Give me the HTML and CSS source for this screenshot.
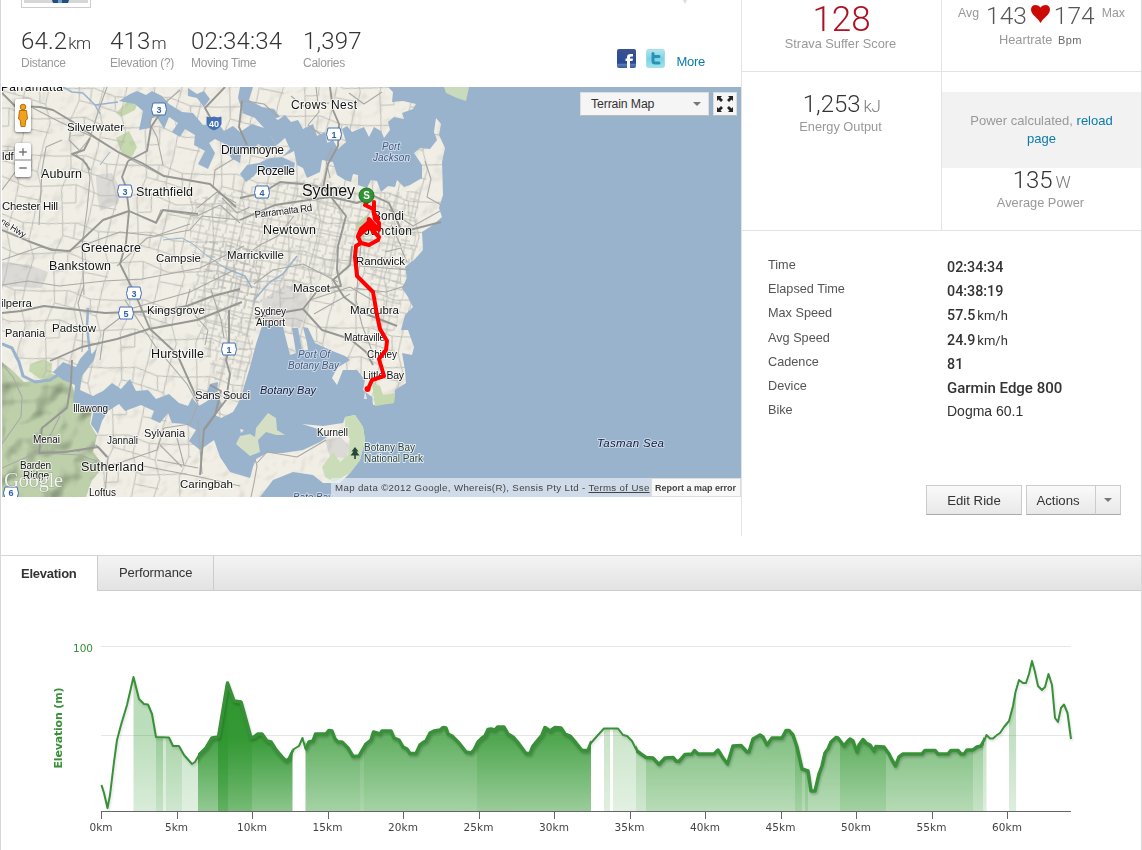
FILE: index.html
```
<!DOCTYPE html>
<html lang="en">
<head>
    <meta charset="UTF-8">
    <title>Ride Details</title>
    <link rel="stylesheet" href="styles.css">
</head>
<body>
<div class="page">
    <div class="ride">
        <div class="main">
            <div class="summary">
                <div class="avatar">
                    <svg width="64" height="3" viewBox="0 0 64 3"><rect width="64" height="3" fill="#d5d8d6"/><path d="M28 0h17l-1 3H29z" fill="#234f7c"/><path d="M34 0h4v3h-4z" fill="#6d9fc9"/></svg>
                </div>
                <div class="notch"></div>
            </div>
            <div class="stats-row">
                <ul class="stats">
                    <li class="distance"><b>64.2<small>km</small></b><span>Distance</span></li>
                    <li class="climb"><b>413<small>m</small></b><span>Elevation (?)</span></li>
                    <li class="moving"><b>02:34:34</b><span>Moving Time</span></li>
                    <li><b>1,397</b><span>Calories</span></li>
                </ul>
                <div class="share">
                    <svg width="20" height="21" viewBox="0 0 20 21">
                        <defs><linearGradient id="fb" x2="0" y2="1"><stop offset="0" stop-color="#3b5290"/><stop offset=".75" stop-color="#2b4a96"/><stop offset=".8" stop-color="#5d7cb8"/><stop offset="1" stop-color="#39599c"/></linearGradient></defs>
                        <rect width="19" height="19" rx="2" fill="url(#fb)"/>
                        <path d="M10 19v-7H8.500V9.500H10V8q0-3 3.500-3H16v2.500h-1.500q-1.500 0-1.500 1v1h3l-.5 2.500H13v7z" fill="#fff"/>
                    </svg>
                    <svg width="20" height="21" viewBox="0 0 20 21">
                        <defs><linearGradient id="tw" x2="0" y2="1"><stop offset="0" stop-color="#b3e6ef"/><stop offset=".5" stop-color="#7bd3e6"/><stop offset="1" stop-color="#9de4ed"/></linearGradient></defs>
                        <rect x=".5" y=".5" width="18" height="18" rx="2" fill="url(#tw)" stroke="#a5dde6"/>
                        <path d="M7 4.500v7.500q0 2 2 2H13M7 7.500H13" fill="none" stroke="#2c92b3" stroke-width="3" stroke-linecap="round"/>
                    </svg>
                    <a href="#">More</a>
                </div>
            </div>

            <div class="map">
                <svg class="tiles" width="739" height="410" viewBox="2 87 739 410">
                    <defs>
                        <filter id="relief" x="0" y="0" width="1" height="1">
                            <feTurbulence type="fractalNoise" baseFrequency=".07" numOctaves="2" seed="8"/>
                            <feDiffuseLighting surfaceScale="3" diffuseConstant="1.200" lighting-color="#fff"><feDistantLight azimuth="225" elevation="58"/></feDiffuseLighting>
                        </filter>
                        <filter id="hills" x="0" y="0" width="1" height="1">
                            <feTurbulence type="fractalNoise" baseFrequency=".04" numOctaves="2" seed="21"/>
                            <feDiffuseLighting surfaceScale="10" diffuseConstant="1.220" lighting-color="#fff"><feDistantLight azimuth="225" elevation="56"/></feDiffuseLighting>
                        </filter>
                        <clipPath id="bush"><path d="M2 362L14 372 24 382 40 380 52 374 62 376 72 385 78 404 92 410 90 424 97 436 93 452 104 466 92 480 86 497H2z"/></clipPath>
                        <pattern id="streets" width="76" height="68" patternUnits="userSpaceOnUse" patternTransform="rotate(7)">
                            <path d="M0 12L28 8 50 14 76 12M0 42L22 38 48 46 76 42M12 0L15 22 8 44 12 68M39 0L35 25 41 44 39 68M61 0L58 30 65 48 61 68M15 22L35 25 58 30M41 56L65 58M22 38L24 56 11 58M50 14L52 28M26 9V24" fill="none" stroke="#b4b4af" stroke-width=".8"/>
                        </pattern>
                        <pattern id="grid" width="17" height="14" patternUnits="userSpaceOnUse" patternTransform="rotate(12)">
                            <path d="M0 4H17M0 11H9M5 0V14M12 0V4M14 4V14" fill="none" stroke="#b4b4b0" stroke-width=".75"/>
                        </pattern>
                    </defs>

                    <!-- land -->
                    <rect x="2" y="87" width="739" height="410" fill="#f0eee5"/>
                    <g fill="#dcdad6">
                        <path d="M96 175L112 173 121 190 118 204 100 211 97 195z"/>
                        <path d="M2 262L30 265 48 272 42 288 2 286z"/>
                        <path d="M262 300L285 285 303 287 309 305 300 328 264 323z"/>
                        <path d="M325 440L340 437 350 446 346 458 330 457z"/>
                    </g>
                    <g fill="#c6d8ae">
                        <path d="M116 113L130 99 139 99 135 110 121 117z"/>
                        <path d="M116 138L129 131 137 147 132 157 122 154z"/>
                        <path d="M30 364L44 359 52 364 51 377 40 379 29 371z"/>
                        <path d="M355 224L367 215 374 222 371 236 360 238z"/>
                    </g>
                    <rect x="2" y="87" width="445" height="410" filter="url(#relief)" class="shade"/>
                    <g clip-path="url(#bush)">
                        <rect x="2" y="350" width="120" height="150" fill="#bdd0aa"/>
                        <rect x="2" y="350" width="120" height="150" filter="url(#hills)" class="shade deep"/>
                    </g>
                    <path d="M2 87H445V415H250L200 425 180 497H100L96 440 90 408 70 400 70 380 40 378 2 345z" fill="url(#streets)"/>
                    <path d="M255 186L320 178 365 195 420 190 415 250 395 330 372 340 370 262 240 310 190 250 190 200z" fill="url(#grid)"/>
                    <path d="M205 240L262 250 258 320 245 380 215 380 190 300z" fill="url(#grid)"/>

                    <!-- Pacific, harbour and Botany Bay -->
                    <g fill="#99b3cc">
                        <path d="M741 87H388L393 92 392 102 403 101 416 104 413 109 402 113 404 119 394 117 388 122 390 130 384 138 381 131 374 127 369 137 364 127 352 132 347 126 342 129 346 142 338 149 333 140 327 143 325 132 317 136 313 124 303 129 298 120 291 122 285 115 278 120 266 112 255 111 247 106 242 113 255 118 264 128 260 137 270 136 277 145 285 138 290 149 282 157 294 151 297 165 303 168 307 178 320 172 322 160 333 162 337 175 345 180 351 182 353 174 358 175 358 185 367 188 371 180 377 181 381 192 388 186 395 187 397 180 404 187 410 185 422 178 422 165 414 153 420 148 430 149 437 140 434 132 436 118 441 124 439 135 445 148 442 162 443 195 439 208 442 217 433 225 422 232 423 250 414 260 405 267 407 278 402 288 408 297 413 307 405 315 401 330 408 330 414 347 412 355 402 353 405 370 406 383 395 390 394 403 373 405 372 397 363 390 365 380 357 370 343 370 337 385 332 378 337 368 350 360 345 356 330 350 315 343 308 328 303 327 307 343 308 350 302 350 298 328 292 328 296 353 290 355 283 327 263 323 256 344 250 367 240 400 233 412 217 420 213 437 220 457 230 472 250 478 253 467 256 459 267 453 283 453 303 450 320 442 327 437 318 429 302 424 323 426 343 423 345 417 355 415 363 427 365 440 360 460 350 473 340 483 323 483 313 475 293 472 273 480 260 497H741z"/>
                        <path d="M119 101L130 94 137 91 146 95 152 91 162 96 169 104 182 112 193 113 203 125 218 123 224 131 233 126 240 132 252 124 264 128 277 145 269 150 258 144 251 152 242 148 240 163 231 158 225 144 215 139 209 143 215 153 208 169 198 164 205 151 194 145 195 135 185 129 180 137 172 132 178 123 169 117 164 129 157 117 152 118 150 128 139 130 143 111 135 104z"/>
                        <path d="M240 87H253L249 100 262 107 274 109 280 117 264 121 253 113 243 113 238 98z"/>
                        <path d="M188 88L197 94 204 91 210 99 204 107 197 98 188 96z"/>
                        <path d="M240 174L247 165 259 163 270 158 282 157 295 163 293 174 280 168 270 172 260 168 254 176 246 182z"/>
                        <path d="M53 372L63 362 76 367 80 359 88 350 92 354 97 348 94 360 82 376 80 390 93 396 103 391 112 383 121 389 130 379 136 391 148 390 156 399 169 394 179 403 188 406 192 398 199 406 217 395 222 404 215 415 225 420 214 440 200 450 189 441 196 430 185 424 172 423 168 413 160 423 151 419 154 411 141 405 125 411 119 404 108 411 102 421 98 434 91 424 94 409 82 407 73 401 75 385 63 380z"/>
                        <path d="M205 398L210 384 218 382 217 392z"/>
                    </g>
                    <g fill="none" stroke="#99b3cc" stroke-width="2" stroke-linejoin="round">
                        <path d="M63 87L72 92 83 93 95 105 118 102M95 105L100 114" stroke-width="1.500"/>
                        <path d="M2 344L12 348 19 362 23 376 35 382 50 380 61 373" stroke-width="3"/>
                        <path d="M90 354L87 326 88 308" stroke-width="2.500"/>
                        <path d="M297 256L283 274 270 282 254 300M225 268L245 276 252 288" stroke-width="1.500"/>
                        <path d="M163 240L182 238 193 244 206 255 225 268" stroke-width="1"/>
                        <path d="M110 152L100 165" stroke-width="1"/>
                    </g>

                    <!-- islands and headlands -->
                    <path d="M444 87H469L466 101 457 98 446 93z" fill="#c9dabd"/>
                    <path d="M240 436L250 434 255 437 256 428 268 413 276 418 277 430 285 435 276 435 266 432 258 440 260 452 250 456 236 444z" fill="#d5dfc6"/>
                    <path d="M345 417L355 415 363 427 365 440 360 460 350 473 334 482 325 477 322 467 333 452 340 462 348 455 350 440 345 428z" fill="#cbddb8"/>
                    <path d="M372 382L380 386 383 395 395 393 394 403 375 406z" fill="#c6d8ae"/>
                    <path d="M365 391l2 8-3 0zM240 429l4 1-3 3z" fill="#e8e8e2"/>

                    <!-- roads -->
                    <g fill="none" stroke="#a9a9a6" stroke-width="1.100" stroke-linejoin="round">
                        <path d="M33 108L60 122 93 137 128 158 165 177"/>
                        <path d="M107 87L98 112 90 138 76 155 87 164 90 178 87 210 82 245 84 295"/>
                        <path d="M72 122L69 140 81 152M62 140L46 147 42 170 39 225M2 190L16 171 30 165"/>
                        <path d="M2 260L40 247 67 251 120 232 155 236 190 224"/>
                        <path d="M129 211L156 222 161 210 197 216 220 205 240 223"/>
                        <path d="M163 165L157 137 149 122 159 108 180 90"/>
                        <path d="M213 188L215 170 240 155M197 208L217 192 236 203M222 198L237 213 250 207"/>
                        <path d="M117 266L147 238 190 230 202 216 240 220"/>
                        <path d="M2 285L28 281 59 286 104 281 142 279 200 268 244 246"/>
                        <path d="M82 352L83 325 78 303 84 285M100 360L104 330 133 308 190 292 234 270"/>
                        <path d="M190 289L186 305 208 330 205 345M211 290L221 320 224 338"/>
                        <path d="M125 300L155 346 187 384 198 404 190 424 164 428 157 450 110 466 80 455 39 453 40 430 66 407"/>
                        <path d="M2 364L13 377 22 397 21 417 2 444"/>
                        <path d="M60 416L51 434 37 453M2 468L38 452M77 452L96 445 108 457 105 495"/>
                        <path d="M143 466L200 477 240 486M157 460L198 468M176 434L184 465M198 420L202 474M160 445L182 467"/>
                        <path d="M255 459L257 466 254 483 251 497M257 463L267 452 297 457 326 440"/>
                        <path d="M240 259L260 245 278 236 294 216M254 284L273 270 303 264 338 282"/>
                        <path d="M361 244L356 300 362 325 372 351 373 360M360 266L410 270M354 288L386 292 408 285M310 300L350 287 372 300M314 314L335 302 350 294"/>
                        <path d="M385 252L401 248 407 262M389 210L413 226 440 211M425 161L431 179 427 197 441 205M391 225L401 246"/>
                        <path d="M330 178L326 160 332 148M316 87L319 112 308 125 321 135M349 93L364 104 382 92"/>
                        <path d="M240 100L264 104 278 117M291 96L303 106 329 103M2 151L27 149"/>
                    </g>
                    <g fill="none" stroke="#979794" stroke-width="1.900" stroke-linejoin="round">
                        <path d="M2 93L15 106 40 107 53 110 73 122 96 138 118 152 142 163 164 176 210 184 236 207"/>
                        <path d="M128 161L122 177 126 187 129 211 126 243 120 264 136 296 150 329 177 354 198 401"/>
                        <path d="M128 161L147 151 151 127 163 109"/>
                        <path d="M90 138L84 150 72 154 83 160 90 170"/>
                        <path d="M2 230L28 241 52 250 70 251 103 220 129 211 156 223 163 210 198 214"/>
                        <path d="M2 313L21 311 44 306 105 313 160 311 187 306 213 296 240 289"/>
                        <path d="M50 361L82 347 117 339 149 329 197 320 242 302"/>
                        <path d="M72 360L71 383 67 408 42 428 39 453 65 452 98 447 107 457"/>
                        <path d="M242 101L239 127 247 145M225 87L205 108 214 124"/>
                        <path d="M330 87L333 110 339 124 338 146 328 164 323 188 331 197 346 216 338 246 337 270 341 286 318 290 303 309 273 314 255 318"/>
                        <path d="M240 198L262 193 280 182 302 184 323 188 350 188"/>
                        <path d="M240 220L275 205 315 199 331 197 357 203 374 196 389 203 402 232 441 222"/>
                        <path d="M229 310L229 350 226 360 230 374 226 400 204 429 200 475"/>
                        <path d="M205 429L215 415 221 391 210 385"/>
                        <path d="M303 309L322 330 350 339 366 352 373 365"/>
                        <path d="M352 246L350 265 333 280 344 297 366 314 397 326"/>
                    </g>

                    <g class="places">
                        <text x="1" y="91" font-size="12" textLength="62">Parramatta</text>
                        <text x="67" y="131" font-size="11.500" textLength="57">Silverwater</text>
                        <text x="291" y="109" font-size="12" textLength="66">Crows Nest</text>
                        <text x="221" y="154" font-size="12" textLength="63">Drummoyne</text>
                        <text x="257" y="175" font-size="12" textLength="38">Rozelle</text>
                        <text x="302" y="196" font-size="16" textLength="53">Sydney</text>
                        <text x="41" y="178" font-size="12.500" textLength="41">Auburn</text>
                        <text x="136" y="196" font-size="12.500" textLength="57">Strathfield</text>
                        <text x="2" y="210" font-size="11.500" textLength="56">Chester Hill</text>
                        <text x="2" y="160" font-size="11">ldf</text>
                        <text x="255" y="218" font-size="10" textLength="58" transform="rotate(-7 255 218)">Parramatta Rd</text>
                        <text x="0" y="223" font-size="9" textLength="28" transform="rotate(32 0 223)">ne Hwy</text>
                        <text x="263" y="234" font-size="12.500" textLength="53">Newtown</text>
                        <text x="373" y="220" font-size="12" textLength="31">Bondi</text>
                        <text x="364" y="235" font-size="12" textLength="48">Junction</text>
                        <text x="81" y="252" font-size="12.500" textLength="60">Greenacre</text>
                        <text x="49" y="270" font-size="12.500" textLength="62">Bankstown</text>
                        <text x="156" y="262" font-size="11.500" textLength="45">Campsie</text>
                        <text x="227" y="259" font-size="11.500" textLength="57">Marrickville</text>
                        <text x="356" y="265" font-size="11.500" textLength="49">Randwick</text>
                        <text x="293" y="292" font-size="11.500" textLength="37">Mascot</text>
                        <text x="1" y="307" font-size="11.500" textLength="31">ilperra</text>
                        <text x="5" y="337" font-size="11" textLength="40">Panania</text>
                        <text x="52" y="332" font-size="11.500" textLength="44">Padstow</text>
                        <text x="147" y="314" font-size="11.500" textLength="58">Kingsgrove</text>
                        <text x="254" y="315" font-size="10" textLength="32">Sydney</text>
                        <text x="256" y="326" font-size="10" textLength="29">Airport</text>
                        <text x="350" y="314" font-size="11.500" textLength="49">Maroubra</text>
                        <text x="344" y="341" font-size="10" textLength="41">Matraville</text>
                        <text x="367" y="358" font-size="10" textLength="30">Chifley</text>
                        <text x="363" y="379" font-size="10.500" textLength="41">Little Bay</text>
                        <text x="151" y="358" font-size="12.500" textLength="53">Hurstville</text>
                        <text x="195" y="399" font-size="11.500" textLength="55">Sans Souci</text>
                        <text x="73" y="412" font-size="10" textLength="35">Illawong</text>
                        <text x="33" y="443" font-size="10" textLength="27">Menai</text>
                        <text x="107" y="444" font-size="10" textLength="31">Jannali</text>
                        <text x="144" y="437" font-size="11" textLength="41">Sylvania</text>
                        <text x="317" y="436" font-size="10" textLength="31">Kurnell</text>
                        <text x="20" y="469" font-size="10" textLength="31">Barden</text>
                        <text x="23" y="479" font-size="10" textLength="26">Ridge</text>
                        <text x="81" y="471" font-size="12.500" textLength="63">Sutherland</text>
                        <text x="89" y="496" font-size="10" textLength="27">Loftus</text>
                        <text x="180" y="488" font-size="11.500" textLength="53">Caringbah</text>
                        <g fill="#26463a">
                            <text x="364" y="451" font-size="10" textLength="51">Botany Bay</text>
                            <text x="364" y="462" font-size="10" textLength="59">National Park</text>
                        </g>
                        <g class="water">
                            <text x="382" y="150" font-size="10" textLength="18" fill="#44597c">Port</text>
                            <text x="373" y="161" font-size="10" textLength="37" fill="#44597c">Jackson</text>
                            <text x="298" y="358" font-size="10" textLength="32" fill="#44597c">Port Of</text>
                            <text x="288" y="369" font-size="10" textLength="51" fill="#44597c">Botany Bay</text>
                            <text x="260" y="394" font-size="11" textLength="56">Botany Bay</text>
                            <text x="597" y="447" font-size="11.500" textLength="67">Tasman Sea</text>
                            <text x="293" y="501" font-size="10" textLength="40" fill="#44597c">Bate Bay</text>
                        </g>
                    </g>
                    <path d="M355 447l-3.500 4.500h2l-3 4h3.700V459h1.600v-3.500h3.700l-3-4h2z" fill="#26463a"/>

                    <!-- route shields -->
                    <g class="shields">
                        <path d="M153 103h12l1.500 6.500-1.500 5.500h-12l-1.500-5.500z"/><text x="159" y="112.500">3</text>
                        <path d="M119 185h12l1.500 6.500-1.500 5.500h-12l-1.500-5.500z"/><text x="125" y="194.500">3</text>
                        <path d="M128 287h12l1.500 6.500-1.500 5.500h-12l-1.500-5.500z"/><text x="134" y="296.500">3</text>
                        <path d="M120 307h12l1.500 6.500-1.500 5.500h-12l-1.500-5.500z"/><text x="126" y="316.500">5</text>
                        <path d="M223 343h12l1.500 6.500-1.500 5.500h-12l-1.500-5.500z"/><text x="229" y="352.500">1</text>
                        <path d="M328 128h12l1.500 6.500-1.500 5.500h-12l-1.500-5.500z"/><text x="334" y="137.500">1</text>
                        <path d="M256 186h12l1.500 6.500-1.500 5.500h-12l-1.500-5.500z"/><text x="262" y="195.500">4</text>
                        <path d="M5 487h12l1.500 6-1.500 5.500H5l-1.500-5.500z"/><text x="11" y="496">6</text>
                        <path class="metro" d="M207 117l3 1 4-1 4 1 3-1v7q-1 4-7 6-6-2-7-6z"/><text class="metro-no" x="214" y="127">40</text>
                    </g>

                    <!-- ride -->
                    <path d="M367 202L365 205 373 209 375 219 379 223 379 230 369 219 368 225 377 229 370 221 361 229 358 236 369 227 379 237 378 240 369 245 361 243 358 237 364 230M374 202L374 213 378 219M361 243L356 246 355 257 357 276 366 285 373 292 377 315 380 329 387 341 386 350 379 359 384 376 372 380 368 389" fill="none" stroke="#f00" stroke-width="4" stroke-linejoin="round" stroke-linecap="round"/>
                    <circle cx="367.500" cy="389" r="3" fill="#f00"/>
                    <circle cx="366.500" cy="195.500" r="7.500" fill="#2f9333" stroke="#1c7323"/>
                    <text x="366.500" y="199" text-anchor="middle" class="start">S</text>
                    <text x="4" y="487" class="logo" textLength="59">Google</text>
                </svg>

                <div class="pegman">
                    <svg width="12" height="26" viewBox="0 0 12 26"><path d="M2.500 8.500h7l1 8.500-1.700 1-.8 6.500H4L3.200 18l-1.700-1z" fill="#eea21f" stroke="#b87006"/><circle cx="6" cy="5" r="2.800" fill="#eea21f" stroke="#b87006"/></svg>
                </div>
                <div class="zoom">
                    <svg width="17" height="34" viewBox="0 0 17 34"><path d="M4.500 8.500h8M8.500 4.500v8M4.500 25.500h8" stroke="#777" stroke-width="1.500"/><path d="M0 17h17" stroke="#777"/></svg>
                </div>
                <div class="map-tools">
                    <div class="map-type">Terrain Map<i class="caret"></i></div>
                    <div class="expand">
                        <svg width="16" height="16" viewBox="0 0 16 16"><path d="M0 0h5L3.500 1.500 6 4 4 6 1.500 3.500 0 5zM16 0v5l-1.500-1.500L12 6l-2-2 2.500-2.500L11 0zM0 16v-5l1.500 1.500L4 10l2 2-2.500 2.500L5 16zM16 16h-5l1.500-1.500L10 12l2-2 2.500 2.500L16 11z" fill="#222"/></svg>
                    </div>
                </div>
                <div class="credits">
                    <span>Map data ©2012 Google, Whereis(R), Sensis Pty Ltd - <u>Terms of Use</u></span>
                    <b>Report a map error</b>
                </div>
            </div>
        </div>

        <div class="side">
            <div class="cells">
                <div class="cell top suffer">
                    <div class="score">128</div>
                    <div class="caption">Strava Suffer Score</div>
                </div>
                <div class="cell top heart">
                    <div class="rates">
                        <span>Avg</span><b>143</b>
                        <svg width="19" height="18" viewBox="0 0 19 18"><path d="M9.500 18Q7.500 14.500 4 11.500 0 8 0 4.800 0 0 4.800 0 8 0 9.500 2.600 11 0 14.200 0 19 0 19 4.800 19 8 15 11.500 11.500 14.500 9.500 18z" fill="#cc0a04"/></svg>
                        <b>174</b><span>Max</span>
                    </div>
                    <div class="caption">Heartrate <em>Bpm</em></div>
                </div>
                <div class="cell energy">
                    <div class="value">1,253<small>kJ</small></div>
                    <div class="caption">Energy Output</div>
                </div>
                <div class="cell power">
                    <div class="notice">Power calculated, <a href="#">reload page</a></div>
                    <div class="value">135<small>W</small></div>
                    <div class="caption">Average Power</div>
                </div>
            </div>
            <dl class="details">
                <dt>Time</dt><dd>02:34:34</dd>
                <dt>Elapsed Time</dt><dd>04:38:19</dd>
                <dt>Max Speed</dt><dd>57.5<span>km/h</span></dd>
                <dt>Avg Speed</dt><dd>24.9<span>km/h</span></dd>
                <dt>Cadence</dt><dd>81</dd>
                <dt>Device</dt><dd class="device">Garmin Edge 800</dd>
                <dt>Bike</dt><dd class="plain">Dogma 60.1</dd>
            </dl>
            <div class="buttons">
                <button class="edit">Edit Ride</button>
                <div class="split"><button>Actions</button><button class="more"><i class="caret"></i></button></div>
            </div>
        </div>
    </div>

    <div class="tabs">
        <div class="tab active">Elevation</div>
        <div class="tab">Performance</div>
    </div>

    <svg class="chart" width="1140" height="259" viewBox="1 591 1140 259">
        <defs>
            <linearGradient id="fade" gradientUnits="userSpaceOnUse" x1="0" y1="680" x2="0" y2="811">
                <stop offset="0" stop-color="#2e962e"/>
                <stop offset=".45" stop-color="#2e962e" stop-opacity=".95"/>
                <stop offset="1" stop-color="#2e962e" stop-opacity=".55"/>
            </linearGradient>
            <clipPath id="under"><path id="area"/></clipPath>
            <clipPath id="climbs"><path d="M198 640h94.500v180H198zM305.500 640H591v180H305.500zM636 640h348v180H636z"/></clipPath>
        </defs>
        <path d="M101 646.500H1071M101 735.500H1071" stroke="#e6e6e6"/>
        <g id="bands" clip-path="url(#under)" fill="url(#fade)"></g>
        <g fill="none" stroke="#389038" stroke-linejoin="round">
            <path id="profile" class="line"/>
            <use href="#profile" class="thick" clip-path="url(#climbs)"/>
        </g>
        <path d="M101 811.500H1071M101.500 811v8M177.500 811v8M252.500 811v8M328.500 811v8M403.500 811v8M479.500 811v8M554.500 811v8M630.500 811v8M705.500 811v8M781.500 811v8M856.500 811v8M932.500 811v8M1007.500 811v8" fill="none" stroke="#666"/>
        <g class="axis">
            <text x="101" y="831" textLength="23">0km</text>
            <text x="176.500" y="831" textLength="23">5km</text>
            <text x="252" y="831" textLength="30">10km</text>
            <text x="327.500" y="831" textLength="30">15km</text>
            <text x="403" y="831" textLength="30">20km</text>
            <text x="478.500" y="831" textLength="30">25km</text>
            <text x="554" y="831" textLength="30">30km</text>
            <text x="629.500" y="831" textLength="30">35km</text>
            <text x="705" y="831" textLength="30">40km</text>
            <text x="780.500" y="831" textLength="30">45km</text>
            <text x="856" y="831" textLength="30">50km</text>
            <text x="931.500" y="831" textLength="30">55km</text>
            <text x="1007" y="831" textLength="30">60km</text>
            <text x="83" y="652" textLength="20" class="scale">100</text>
            <text x="62" y="728" textLength="81" transform="rotate(-90 62 728)" class="title">Elevation (m)</text>
        </g>
    </svg>
</div>
<script src="chart.js"></script>
</body>
</html>
```
FILE: chart.js
```
const points = [
    [101.5, 785], [104, 793], [107.5, 808], [110, 795], [114, 762], [117, 740], [121, 725], [127, 705], [133.5, 677],
    [139, 699], [144, 704], [148, 704.5], [152, 714], [156, 737], [169, 737.5], [173, 746], [179, 746], [184, 755],
    [192, 764], [195, 762], [199, 755], [206, 748], [212, 738], [218.5, 737], [227.5, 683], [234, 701], [241, 702],
    [251, 738], [254, 737], [258, 734], [262, 734], [267, 741], [271, 742], [276, 750], [282, 757], [286, 761],
    [289, 759], [294, 749], [299, 746], [302.5, 738], [305.5, 749], [309, 742], [313, 741], [315.5, 734], [326, 734],
    [329, 730.5], [332, 731], [335, 739], [338, 742], [342, 742], [348, 748], [353, 756.5], [359, 756], [366, 744],
    [371, 740], [373.5, 732], [380, 734], [382, 731], [391, 731], [394, 738], [399, 740], [403, 747], [407, 749],
    [410, 753.5], [416, 753.5], [420, 745], [424, 742], [426, 741], [430, 733], [434, 731], [440, 730], [443, 727.5],
    [446, 728], [448, 734], [452, 736], [459, 743], [466, 752], [471, 753], [474, 750], [478, 742], [482, 738],
    [485, 736], [488, 729.5], [491, 729], [495, 730], [497.5, 727], [504, 727], [508, 734], [513, 737], [519, 744],
    [526, 753.5], [530, 753.5], [533, 746], [542, 735], [545, 727.5], [550, 731], [555, 727.5], [561, 728], [565, 734],
    [570, 736], [576, 743], [582, 750.5], [588, 750.5], [591, 743], [598, 735], [604, 728.5], [618, 728.5], [623, 735],
    [627, 736], [632, 741], [637, 751], [641, 754], [646, 757.5], [653, 758], [659, 764.5], [665, 758], [673, 757.5],
    [676, 761], [679, 761.5], [685, 754.5], [692, 754], [694.5, 750.5], [698, 754], [714, 754], [718, 750], [723, 758],
    [727.5, 764], [733, 746], [741, 745.5], [747, 752], [749, 752], [753, 739], [760, 735], [763, 737], [767, 745],
    [772, 738], [782, 738], [786, 730.5], [789, 730.5], [793, 735], [797, 747], [802, 769], [808, 771], [811, 791],
    [815, 791], [819, 774], [822, 766], [825, 753], [828, 749], [831, 742], [836, 737.5], [838, 738], [844, 746],
    [847, 742], [850, 739], [853, 741], [857, 752], [859, 745], [863, 739.5], [866, 743], [870, 745], [874, 751],
    [876, 746.5], [884, 747], [889, 754], [892, 760], [895.5, 766], [899, 757], [903, 754], [922, 754], [925, 750.5],
    [935, 750.5], [938, 754], [948, 754], [951, 750.5], [958, 750.5], [961, 754], [964, 754], [967, 750], [973, 750],
    [977, 747], [981, 746], [984, 741], [986.5, 735], [990, 738.5], [993, 738.5], [997, 735], [1000, 733], [1004, 727],
    [1009, 721], [1013, 706], [1015.5, 692], [1019, 680], [1023, 683], [1026, 683], [1029, 674], [1032, 661],
    [1035, 672], [1038, 686], [1042, 690], [1045, 687], [1048.5, 674], [1052, 685], [1055, 718], [1058, 722],
    [1061, 708], [1064, 704.5], [1067.5, 713], [1071, 739]
];

const bands = [
    [133.5, 156, .33], [156, 163, .5], [163, 166, .25], [166, 182, .42], [182, 198, .27], [198, 218, .94],
    [218, 228, 1], [218, 228, .8], [228, 252, 1], [228, 252, .4], [252, 292.5, 1], [305.5, 360, .78], [360, 364, .7],
    [364, 477, .78], [477, 591, .88], [604, 610, .27], [613, 636, .25], [636, 646, .42], [646, 795, .62],
    [795, 802, .78], [802, 805, .62], [805, 808, .8], [808, 840, .62], [840, 886, .8], [886, 973, .64],
    [973, 983, .5], [983, 986.5, .3], [1009, 1016, .3]
];

const line = 'M' + points.map(p => p.join(' ')).join('L');
document.getElementById('profile').setAttribute('d', line);
document.getElementById('area').setAttribute('d', line + 'V811H101z');

const group = document.getElementById('bands');
bands.forEach(([from, to, strength]) => {
    const rect = document.createElementNS('http://www.w3.org/2000/svg', 'rect');
    rect.setAttribute('x', from);
    rect.setAttribute('y', 660);
    rect.setAttribute('width', to - from);
    rect.setAttribute('height', 151);
    rect.setAttribute('opacity', strength);
    group.appendChild(rect);
});
```
FILE: styles.css
```
* {
    box-sizing: border-box;
}
body {
    margin: 0;
    background: #fff;
    color: #333;
    font-family: "Liberation Sans", Arial, sans-serif;
    font-size: 13px;
}
a {
    color: #0a7bab;
    text-decoration: none;
}
.page {
    width: 1142px;
    height: 850px;
    overflow: hidden;
    border-left: 1px solid #d8d8d8;
    border-right: 1px solid #d8d8d8;
}
.ride {
    display: flex;
    height: 555px;
}
.main {
    width: 740px;
}
.summary {
    display: flex;
    justify-content: space-between;
    height: 8px;
    padding: 0 54px 0 20px;
}
.avatar {
    width: 70px;
    height: 8px;
    padding: 0 2px;
    border: 1px solid #ccc;
    border-top: 0;
}
.avatar svg {
    display: block;
}
.notch {
    border: 2px solid transparent;
    border-top: 4px solid #ddd;
    border-bottom: 0;
    height: 0;
}
.stats-row {
    display: flex;
    justify-content: space-between;
    height: 79px;
    padding: 0 36px 0 20px;
}
.stats {
    display: flex;
    margin: 0;
    padding: 19px 0 0;
    list-style: none;
}
.stats b {
    display: block;
    height: 29px;
    font: 300 24px/28px Roboto, sans-serif;
    letter-spacing: 0.15px;
    white-space: nowrap;
}
.stats small {
    margin-left: 1px;
    font-size: 17px;
    letter-spacing: -0.7px;
}
.stats span {
    display: block;
    font-size: 12px;
    line-height: 15px;
    letter-spacing: -0.25px;
    color: #999;
}
.stats .distance {
    width: 89px;
}
.stats .climb {
    width: 81px;
}
.stats .moving {
    width: 112px;
}
.share {
    display: flex;
    gap: 9px;
    padding-top: 41px;
}
.share a {
    padding-top: 5px;
    margin-left: 1px;
    letter-spacing: -0.25px;
}

/* map */
.map {
    position: relative;
    width: 739px;
    height: 410px;
    margin-left: 1px;
    overflow: hidden;
}
.tiles {
    display: block;
}
.shade {
    mix-blend-mode: multiply;
    opacity: 0.4;
}
.deep {
    opacity: 0.65;
}
.places {
    fill: #111;
    stroke: rgba(255, 255, 255, 0.75);
    stroke-width: 2px;
    paint-order: stroke;
    stroke-linejoin: round;
}
.water {
    fill: #101b3c;
    font-style: italic;
    stroke: rgba(215, 226, 240, 0.8);
}
.shields path {
    fill: #fff;
    stroke: #4271b4;
}
.shields .metro {
    fill: #4271b4;
}
.shields text {
    fill: #2f62ab;
    font-size: 9px;
    font-weight: bold;
    text-anchor: middle;
}
.shields .metro-no {
    fill: #fff;
}
.start {
    fill: #fff;
    font-size: 10px;
    font-weight: bold;
}
.logo {
    fill: rgba(255, 255, 255, 0.85);
    stroke: rgba(90, 100, 90, 0.35);
    stroke-width: 1px;
    paint-order: stroke;
    font-family: "Liberation Serif", serif;
    font-size: 21px;
}
.pegman, .zoom {
    position: absolute;
    left: 13px;
    width: 16px;
    background: #fff;
    border-radius: 2px;
    box-shadow: 0 1px 3px rgba(0, 0, 0, 0.6);
}
.pegman {
    top: 12px;
    height: 33px;
    padding: 3px 2px;
}
.zoom {
    top: 56px;
    height: 34px;
}
.pegman svg, .zoom svg {
    display: block;
}
.zoom svg {
    width: 16px;
}
.map-tools {
    position: absolute;
    top: 5px;
    right: 4px;
    display: flex;
    gap: 4px;
}
.map-type, .expand {
    height: 24px;
    background: #f5f5f5;
    border: 1px solid #ddd;
    border-bottom-color: #bbb;
}
.map-type {
    display: flex;
    justify-content: space-between;
    align-items: center;
    width: 129px;
    padding: 0 7px 0 10px;
    font-size: 12.3px;
    letter-spacing: -0.15px;
}
.expand {
    width: 24px;
    padding: 3px;
}
.expand svg {
    display: block;
}
.caret {
    width: 0;
    border: 4px solid transparent;
    border-top-color: #777;
    border-bottom: 0;
}
.credits {
    position: absolute;
    right: 0;
    bottom: 0;
    display: flex;
    height: 19px;
    line-height: 19px;
    font-size: 9.7px;
    color: #444;
    background: rgba(229, 236, 243, 0.7);
    white-space: nowrap;
}
.credits span {
    width: 320px;
    padding-left: 4px;
    letter-spacing: 0.34px;
}
.credits b {
    width: 90px;
    padding-left: 3px;
    font-size: 9px;
    background: #f8f8f8;
    border: 1px solid #ddd;
    line-height: 18px;
}

/* right column */
.side {
    width: 400px;
}
.cells {
    display: grid;
    grid-template-columns: 200px 200px;
    grid-template-rows: 72px 159px;
}
.cell {
    text-align: center;
    border-bottom: 1px solid #e3e3e3;
    border-left: 1px solid #e3e3e3;
}
.caption {
    padding-right: 2px;
    color: #999;
    font-size: 12.8px;
    line-height: 16px;
}
.caption em {
    margin-left: 2px;
    color: #666;
    font-style: normal;
    font-size: 11px;
    letter-spacing: 0.5px;
}
.score {
    height: 36px;
    color: #b01022;
    font: 300 35px/39px Roboto, sans-serif;
}
.rates {
    display: flex;
    justify-content: center;
    height: 32px;
    gap: 4px;
    color: #999;
    font-size: 12.3px;
}
.rates b {
    color: #555;
    font: 300 24.5px/31px Roboto, sans-serif;
}
.rates span {
    padding-top: 6px;
    margin: 0 3px;
}
.rates svg {
    margin-top: 5px;
}
.value {
    height: 28px;
    font: 300 24px/26px Roboto, sans-serif;
}
.value small {
    margin-left: 3px;
    font-size: 17px;
    letter-spacing: -0.5px;
    color: #777;
}
.energy {
    padding-top: 19px;
}
.energy .value {
    line-height: 27px;
}
.power {
    padding-top: 20px;
}
.notice {
    height: 76px;
    padding: 20px 25px 0;
    margin-bottom: -1px;
    background: #f2f2f2;
    color: #999;
    line-height: 18px;
}
.details {
    display: grid;
    grid-template-columns: 179px 1fr;
    grid-auto-rows: 24.2px;
    margin: 0;
    padding: 24px 0 0 26px;
    height: 254px;
    border-left: 1px solid #e3e3e3;
}
.details dt {
    line-height: 20px;
    font-size: 12.7px;
    color: #555;
}
.details dd {
    margin: 0;
    font: 500 14.3px/24px Roboto, sans-serif;
    color: #333;
}
.details dd span {
    margin-left: 2px;
    font-weight: 400;
    font-size: 13px;
}
.details .device {
    font-size: 15px;
}
.details .plain {
    font: 14px/22px "Liberation Sans", Arial, sans-serif;
}
.buttons {
    display: flex;
    gap: 4px;
    height: 51px;
    padding-left: 184px;
    border-left: 1px solid #e3e3e3;
}
button {
    height: 30px;
    padding: 0;
    border: 1px solid #ccc;
    border-bottom-color: #aaa;
    background: linear-gradient(#fafafa, #e8e8e8);
    color: #333;
    font: 13.2px "Liberation Sans", Arial, sans-serif;
}
.edit {
    width: 96px;
}
.split {
    display: flex;
    height: 30px;
}
.split button {
    width: 70px;
    padding-right: 6px;
}
.split .more {
    display: flex;
    align-items: center;
    justify-content: center;
    width: 26px;
    margin-left: -1px;
    padding: 0;
}

/* tabs and elevation profile */
.tabs {
    display: flex;
    height: 36px;
    border-top: 1px solid #d5d5d5;
    border-bottom: 1px solid #ccc;
    background: linear-gradient(#f4f4f4, #e3e3e3);
}
.tab {
    height: 34px;
    padding: 9px 21px;
    border-right: 1px solid #ccc;
    line-height: 16px;
    letter-spacing: -0.1px;
}
.tab.active {
    width: 97px;
    height: 35px;
    padding: 10px 0 0 20px;
    background: #fff;
    font-weight: bold;
    letter-spacing: -0.25px;
}
.chart {
    display: block;
}
.line {
    filter: drop-shadow(1px 2px 1px rgba(0, 0, 0, 0.12));
}
#profile {
    stroke-width: inherit;
}
.chart g {
    stroke-width: 2px;
}
.chart .thick {
    stroke-width: 3.5px;
}
.axis text {
    fill: #444;
    font-family: "DejaVu Sans", sans-serif;
    font-size: 10.5px;
    text-anchor: middle;
}
.axis .scale {
    fill: #389038;
}
.axis .title {
    fill: #389038;
    font-weight: bold;
    font-size: 11px;
}
```
